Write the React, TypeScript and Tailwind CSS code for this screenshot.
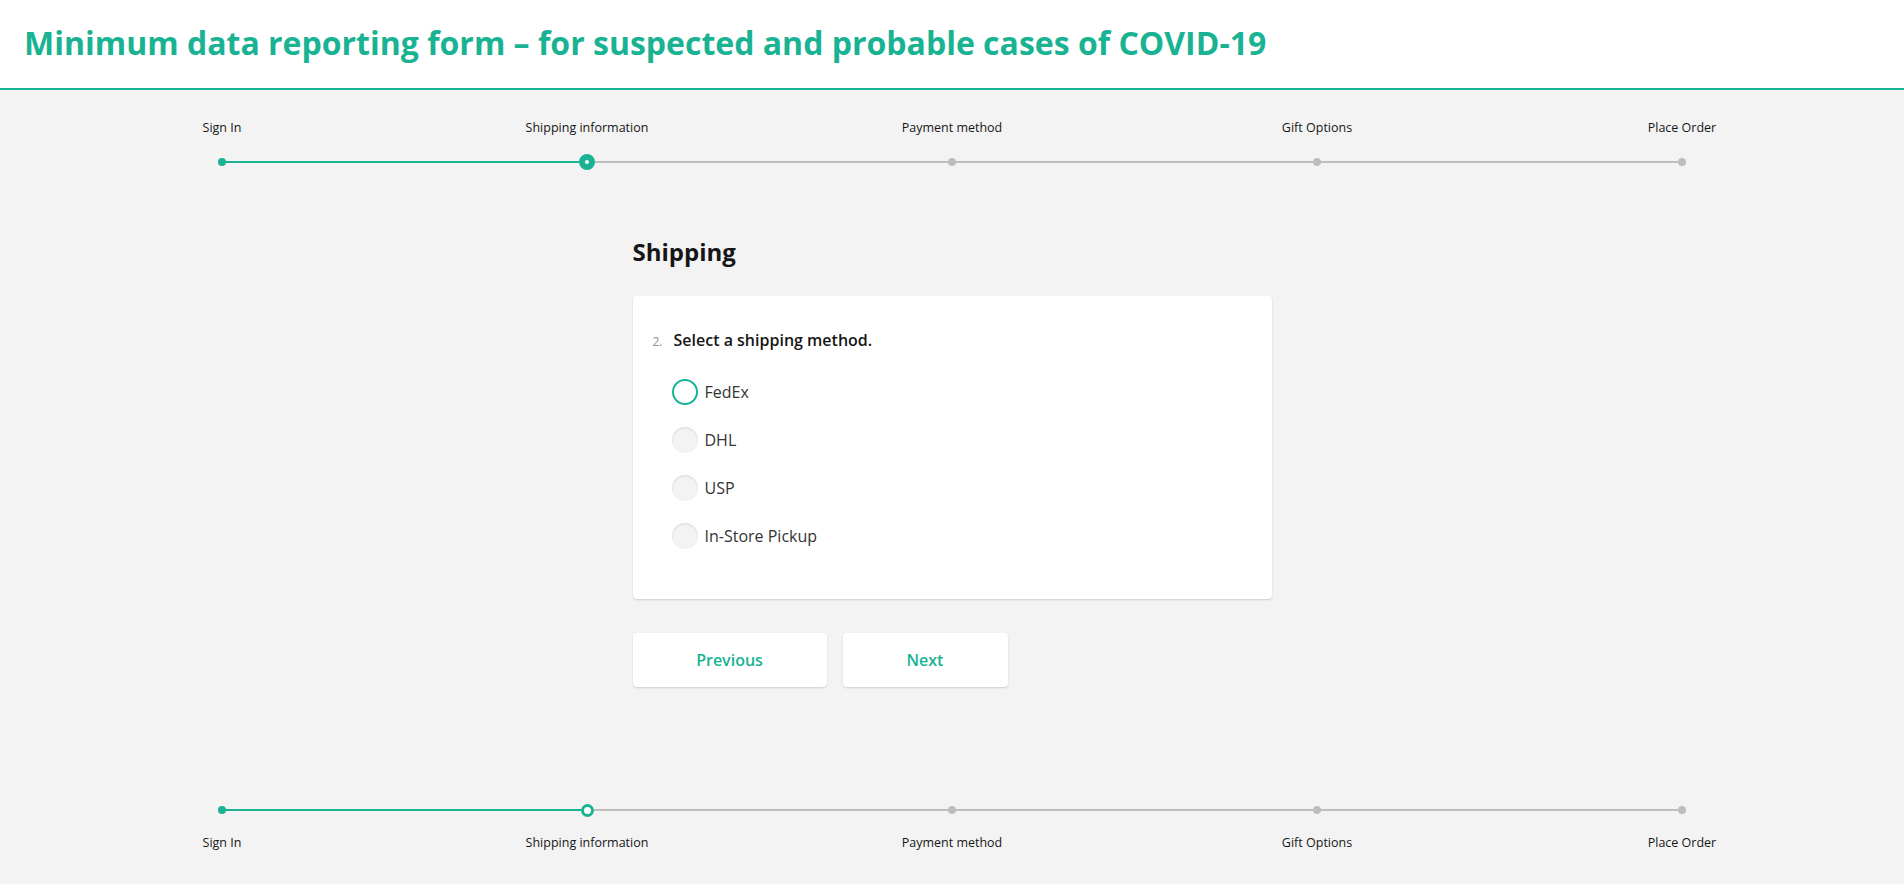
import React from 'react';

const STEPS = ['Sign In', 'Shipping information', 'Payment method', 'Gift Options', 'Place Order'];
const CURRENT = 1;
const OPTIONS = ['FedEx', 'DHL', 'USP', 'In-Store Pickup'];

// segment widths keep dot centres 365px apart (dots are 8px, the current one 16px / 13px)
const TOP_SEGMENTS = ['w-[353px]', 'w-[353px]', 'w-[357px]', 'w-[357px]'];
const BOTTOM_SEGMENTS = ['w-[355px]', 'w-[354px]', 'w-[357px]', 'w-[357px]'];

function StepDot({ index, small }: { index: number; small?: boolean }) {
  if (index === CURRENT) {
    return small ? (
      <div className="w-[13px] h-[13px] shrink-0 rounded-full bg-white border-[3px] border-[#19b394]" />
    ) : (
      <div className="w-4 h-4 shrink-0 rounded-full bg-white border-[6px] border-[#19b394]" />
    );
  }
  return <div className={index < CURRENT ? 'w-2 h-2 shrink-0 rounded-full bg-[#19b394]' : 'w-2 h-2 shrink-0 rounded-full bg-[#bdbdbd]'} />;
}

function StepLine({ small }: { small?: boolean }) {
  const segments = small ? BOTTOM_SEGMENTS : TOP_SEGMENTS;
  return (
    <div className="h-4 flex items-center justify-center">
      {STEPS.map((s, i) => (
        <React.Fragment key={s}>
          <StepDot index={i} small={small} />
          {i < STEPS.length - 1 && (
            <div className={`${segments[i]} h-[2px] shrink-0 ${i < CURRENT ? 'bg-[#19b394]' : 'bg-[#bdbdbd]'}`} />
          )}
        </React.Fragment>
      ))}
    </div>
  );
}

function StepLabels() {
  return (
    <div className="grid grid-cols-[repeat(5,365px)] justify-center">
      {STEPS.map((s) => (
        <div key={s} className="text-center text-[12.5px] leading-4 text-[#161616]">
          {s}
        </div>
      ))}
    </div>
  );
}

function Radio({ label, active }: { label: string; active?: boolean }) {
  return (
    <label className="h-12 flex items-center pl-[19px] cursor-pointer">
      <span
        className={
          active
            ? 'w-[26px] h-[26px] rounded-full bg-white border-2 border-[#19b394]'
            : 'w-[26px] h-[26px] rounded-full bg-[#f3f3f3] shadow-[inset_0_1px_2px_rgba(0,0,0,0.12)]'
        }
      />
      <span className="ml-[7px] text-base text-[#333]">{label}</span>
    </label>
  );
}

export default function App() {
  return (
    <div className="min-h-[884px] bg-[#f3f3f3] flex flex-col" style={{ fontFamily: '"Open Sans", "Noto Sans", sans-serif' }}>
      <header className="h-[90px] bg-white border-b-2 border-[#19b394] flex items-center px-6 pb-[2px]">
        <h1 className="text-[32px] font-bold text-[#19b394] leading-10">
          Minimum data reporting form – for suspected and probable cases of COVID-19
        </h1>
      </header>

      <div className="pt-[30px]">
        <StepLabels />
        <div className="mt-[18px]">
          <StepLine />
        </div>
      </div>

      <main className="w-[639px] mx-auto mt-[67px]">
        <h2 className="text-2xl leading-[30px] font-bold text-[#161616]">Shipping</h2>
        <div className="mt-[29px] bg-white rounded shadow-[0_1px_2px_rgba(0,0,0,0.15)] pt-8 pb-[39px] px-5">
          <div className="flex items-baseline">
            <span className="text-[12px] text-[#909090] mr-[11px]">2.</span>
            <span className="text-base leading-6 font-semibold text-[#161616]">Select a shipping method.</span>
          </div>
          <div className="mt-4 flex flex-col">
            {OPTIONS.map((o, i) => (
              <Radio key={o} label={o} active={i === 0} />
            ))}
          </div>
        </div>
        <div className="mt-[34px] flex gap-4">
          <button className="w-[194px] h-[54px] bg-white rounded shadow-[0_1px_2px_rgba(0,0,0,0.15)] text-base font-semibold text-[#19b394]">
            Previous
          </button>
          <button className="w-[165px] h-[54px] bg-white rounded shadow-[0_1px_2px_rgba(0,0,0,0.15)] text-base font-semibold text-[#19b394]">
            Next
          </button>
        </div>
      </main>

      <div className="mt-[115px] pb-[33px]">
        <StepLine small />
        <div className="mt-[17px]">
          <StepLabels />
        </div>
      </div>
    </div>
  );
}
